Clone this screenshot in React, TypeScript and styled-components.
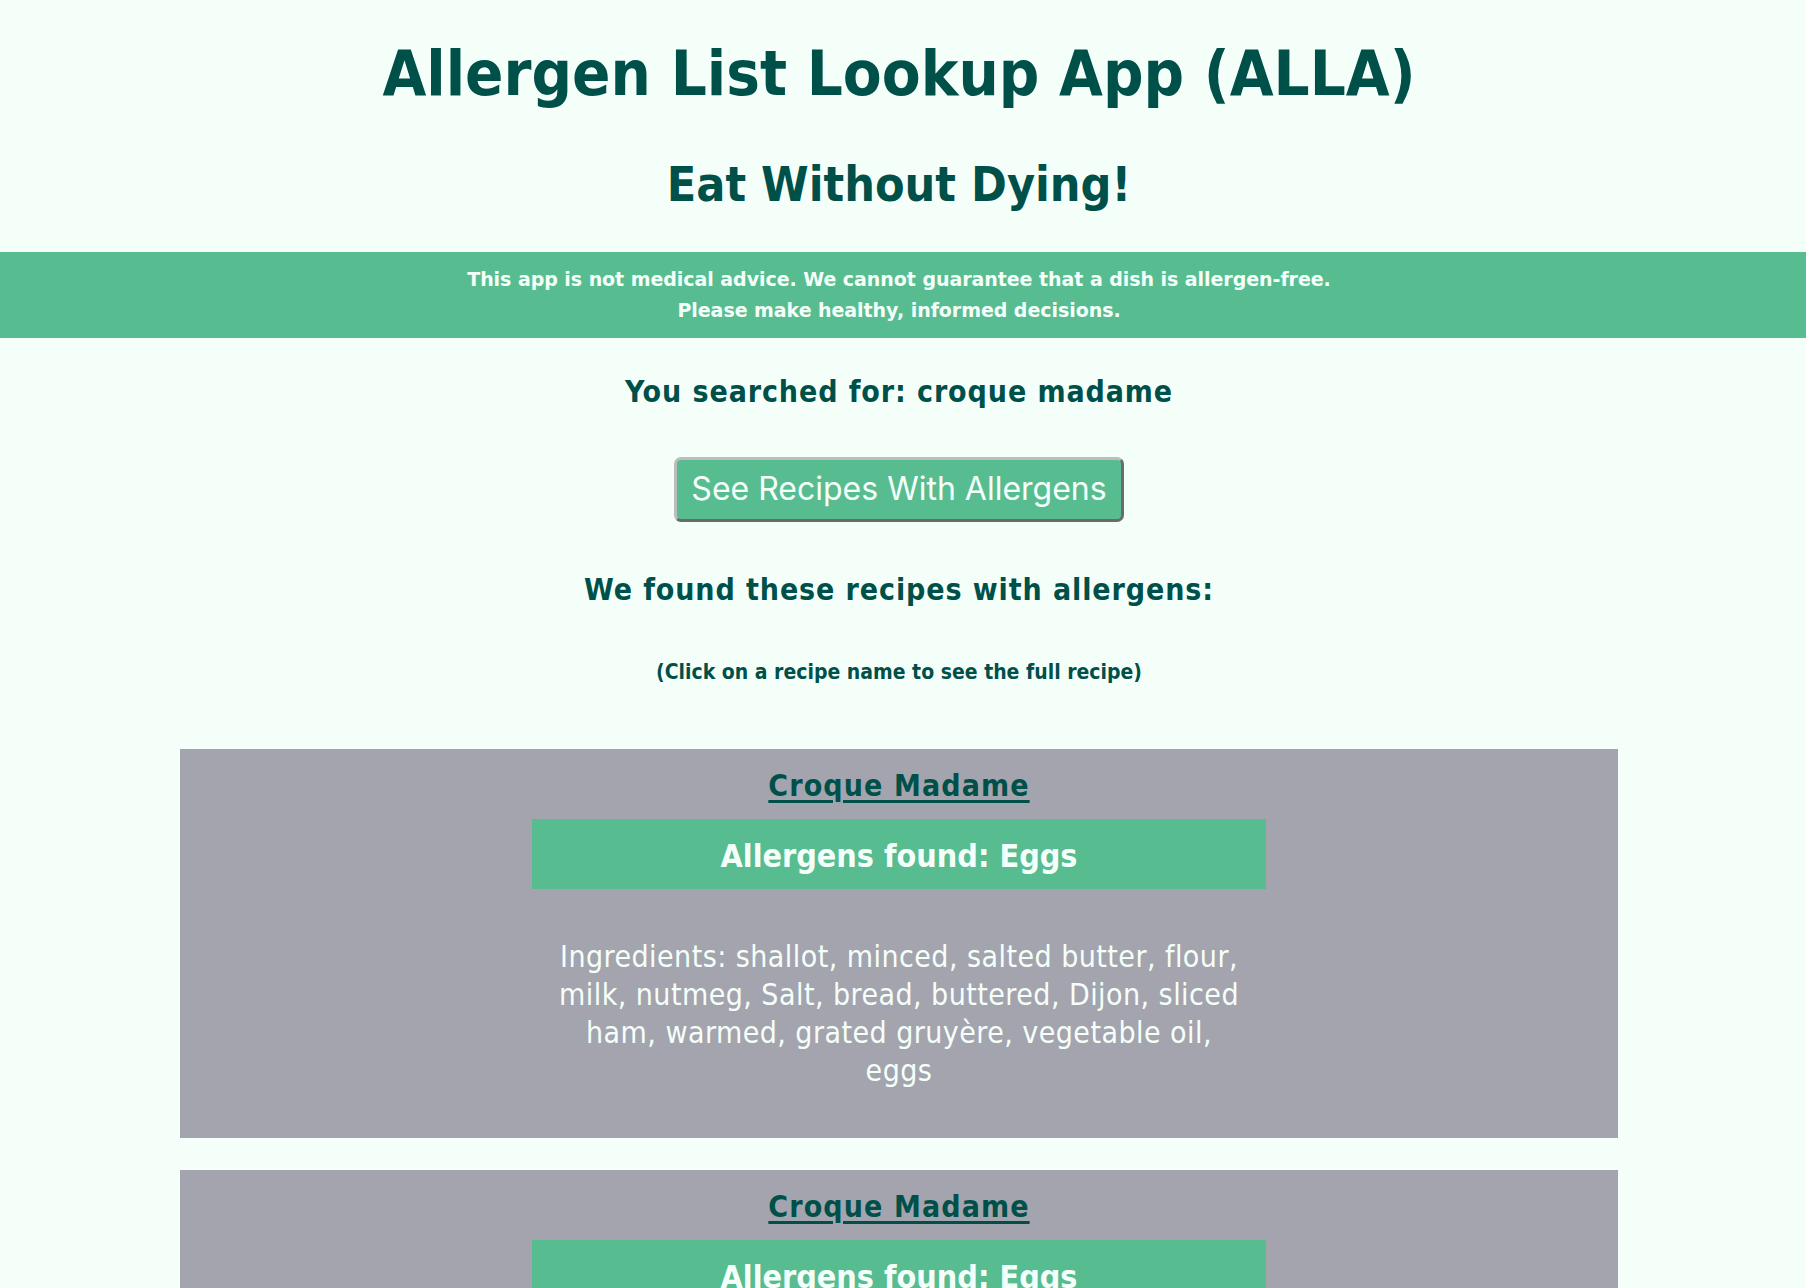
import React from 'react';
import styled, { createGlobalStyle } from 'styled-components';

const darkGreen = '#00504a';
const mint = '#f5fffa';
const seaGreen = '#57bd91';

const GlobalStyle = createGlobalStyle`
  html {
    scrollbar-width: none;
  }
  html::-webkit-scrollbar {
    display: none;
  }
  body {
    margin: 0;
    background: ${mint};
    font-family: "DejaVu Sans Condensed", "DejaVu Sans", Verdana, sans-serif;
    font-stretch: condensed;
  }
`;

const Page = styled.div`
  padding-right: 8px;
  text-align: center;
  color: ${darkGreen};
`;

const Header = styled.header`
  padding-top: 36px;
`;

const Title = styled.h1`
  margin: 0;
  font-size: 63px;
  line-height: 1.2;
  font-weight: bold;
`;

const Subtitle = styled.h2`
  margin: 44px 0 0;
  font-size: 48px;
  line-height: 1.2;
  font-weight: bold;
`;

const Disclaimer = styled.div`
  margin: 39px -8px 0 0;
  padding: 12px 8px 12px 0;
  background: ${seaGreen};
  color: ${mint};
  font-family: "DejaVu Sans", Verdana, sans-serif;
  font-stretch: normal;
  font-size: 19px;
  line-height: 31px;
  font-weight: bold;
  letter-spacing: -0.05px;
`;

const Heading = styled.h2<{ $gap: number }>`
  margin: ${p => p.$gap}px 0 0;
  font-size: 30px;
  line-height: 1.2;
  font-weight: bold;
  letter-spacing: 0.9px;
`;

const Hint = styled.h4`
  margin: 52px 0 0;
  font-size: 21px;
  line-height: 1.2;
  font-weight: bold;
`;

const RecipeButton = styled.button`
  margin-top: 47px;
  padding: 9px 14px 11px;
  background: ${seaGreen};
  color: ${mint};
  font-family: Inter, "Open Sans", sans-serif;
  font-stretch: normal;
  font-size: 32px;
  line-height: normal;
  border: 3px solid;
  border-color: #bdbdbd #6b6b6b #6b6b6b #bdbdbd;
  border-radius: 7px;
  cursor: pointer;
`;

const RecipeList = styled.div`
  display: flex;
  flex-direction: column;
  align-items: center;
  gap: 32px;
  margin-top: 64px;
`;

const RecipeCard = styled.section`
  width: 80%;
  padding: 19px 0 48px;
  background: #a4a4ae;
  display: flex;
  flex-direction: column;
  align-items: center;
`;

const RecipeName = styled.a`
  font-size: 30px;
  line-height: 1.2;
  font-weight: bold;
  letter-spacing: 1.1px;
  color: ${darkGreen};
  text-decoration: underline;
  text-decoration-thickness: 3px;
  text-underline-offset: 4px;
`;

const AllergenBox = styled.div`
  box-sizing: border-box;
  width: 51%;
  height: 70px;
  margin-top: 15px;
  padding-top: 4px;
  background: ${seaGreen};
  color: ${mint};
  font-size: 32px;
  line-height: 66px;
  font-weight: bold;
`;

const Ingredients = styled.p`
  box-sizing: border-box;
  width: 51%;
  margin: 49px 0 0;
  padding: 0 20px;
  color: ${mint};
  font-size: 30px;
  line-height: 38px;
  letter-spacing: 0.45px;
`;

const recipes = [
  {
    id: 1,
    name: 'Croque Madame',
    allergens: 'Eggs',
    ingredients:
      'shallot, minced, salted butter, flour, milk, nutmeg, Salt, bread, buttered, Dijon, sliced ham, warmed, grated gruyère, vegetable oil, eggs',
  },
  {
    id: 2,
    name: 'Croque Madame',
    allergens: 'Eggs',
    ingredients:
      'shallot, minced, salted butter, flour, milk, nutmeg, Salt, bread, buttered, Dijon, sliced ham, warmed, grated gruyère, vegetable oil, eggs',
  },
];

export default function App() {
  return (
    <Page>
      <GlobalStyle />
      <Header>
        <Title>Allergen List Lookup App (ALLA)</Title>
        <Subtitle>Eat Without Dying!</Subtitle>
      </Header>
      <Disclaimer>
        This app is not medical advice. We cannot guarantee that a dish is allergen-free.
        <br />
        Please make healthy, informed decisions.
      </Disclaimer>
      <Heading $gap={36}>You searched for: croque madame</Heading>
      <RecipeButton>See Recipes With Allergens</RecipeButton>
      <Heading $gap={50}>We found these recipes with allergens:</Heading>
      <Hint>(Click on a recipe name to see the full recipe)</Hint>
      <RecipeList>
        {recipes.map(recipe => (
          <RecipeCard key={recipe.id}>
            <RecipeName href="#">{recipe.name}</RecipeName>
            <AllergenBox>Allergens found: {recipe.allergens}</AllergenBox>
            <Ingredients>Ingredients: {recipe.ingredients}</Ingredients>
          </RecipeCard>
        ))}
      </RecipeList>
    </Page>
  );
}
